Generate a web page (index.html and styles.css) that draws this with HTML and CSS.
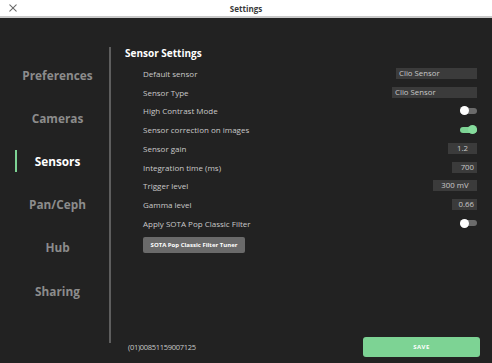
FILE: index.html
```html
<!DOCTYPE html>
<html lang="en">
<head>
    <meta charset="UTF-8">
    <meta name="viewport" content="width=device-width, initial-scale=1.0">
    <title>Settings</title>
    <link rel="stylesheet" href="styles.css">
</head>
<body>
    <header class="top-bar">
        <span class="close-button">
            <svg xmlns="http://www.w3.org/2000/svg" width="8" height="8" viewBox="0 0 10 10" fill="none" stroke="currentColor" stroke-width="1.3" stroke-linecap="round">
                <line x1="1" y1="1" x2="9" y2="9"></line>
                <line x1="9" y1="1" x2="1" y2="9"></line>
            </svg>
        </span>
        <h1 class="top-title">Settings</h1>
    </header>

    <div class="settings-layout">
        <nav class="side-nav">
            <div class="nav-item">Preferences</div>
            <div class="nav-item">Cameras</div>
            <div class="nav-item active">Sensors</div>
            <div class="nav-item">Pan/Ceph</div>
            <div class="nav-item">Hub</div>
            <div class="nav-item">Sharing</div>
        </nav>

        <main class="settings-panel">
            <h2 class="panel-title">Sensor Settings</h2>
            <div class="setting-list">
                <div class="setting-row">
                    <span class="setting-label">Default sensor</span>
                    <span class="field field-default">Clio Sensor</span>
                </div>
                <div class="setting-row">
                    <span class="setting-label">Sensor Type</span>
                    <span class="field field-type">Clio Sensor</span>
                </div>
                <div class="setting-row">
                    <span class="setting-label">High Contrast Mode</span>
                    <span class="toggle"></span>
                </div>
                <div class="setting-row">
                    <span class="setting-label">Sensor correction on images</span>
                    <span class="toggle on"></span>
                </div>
                <div class="setting-row">
                    <span class="setting-label">Sensor gain</span>
                    <span class="field field-gain">1.2</span>
                </div>
                <div class="setting-row">
                    <span class="setting-label">Integration time (ms)</span>
                    <span class="field field-small">700</span>
                </div>
                <div class="setting-row">
                    <span class="setting-label">Trigger level</span>
                    <span class="field field-trigger">300 mV</span>
                </div>
                <div class="setting-row">
                    <span class="setting-label">Gamma level</span>
                    <span class="field field-small">0.66</span>
                </div>
                <div class="setting-row">
                    <span class="setting-label">Apply SOTA Pop Classic Filter</span>
                    <span class="toggle"></span>
                </div>
            </div>
            <button class="tuner-button">SOTA Pop Classic Filter Tuner</button>

            <footer class="panel-footer">
                <span class="device-id">(01)00851159007125</span>
                <button class="save-button">SAVE</button>
            </footer>
        </main>
    </div>
</body>
</html>
```

FILE: styles.css
```css
:root {
    --bg: #222222;
    --field: #3b3b3b;
    --divider: #5e5e5e;
    --label: #c9c9c9;
    --nav: #8c8c8c;
    --green: #7dd394;
}

* {
    margin: 0;
    padding: 0;
    box-sizing: border-box;
}

body {
    font-family: 'Open Sans', sans-serif;
    background: var(--bg);
    width: 492px;
    height: 363px;
    overflow: hidden;
    color: var(--label);
}

.top-bar {
    height: 18px;
    background: #ffffff;
    border-bottom: 2px solid #c9c9c9;
    display: flex;
    align-items: center;
    position: relative;
}

.close-button {
    display: flex;
    color: #6a6a6a;
    margin-left: 9px;
}

.top-title {
    position: absolute;
    left: 0;
    right: 0;
    text-align: center;
    font-size: 8px;
    font-weight: 700;
    color: #3a3a3a;
}

.settings-layout {
    display: flex;
    height: 345px;
}

.side-nav {
    width: 111px;
    margin-top: 29px;
    height: 296px;
    border-right: 2px solid var(--divider);
    display: flex;
    flex-direction: column;
    padding-left: 6px;
    padding-top: 6px;
}

.nav-item {
    height: 43.2px;
    display: flex;
    align-items: center;
    justify-content: center;
    font-size: 11.8px;
    font-weight: 700;
    color: var(--nav);
    position: relative;
}

.nav-item.active {
    color: #ffffff;
}

.nav-item.active::before {
    content: '';
    position: absolute;
    left: 9px;
    top: 11px;
    width: 2px;
    height: 22px;
    background: var(--green);
}

.settings-panel {
    flex: 1;
    display: flex;
    flex-direction: column;
    padding: 29px 12px 6px 14px;
}

.panel-title {
    font-size: 10px;
    font-weight: 700;
    color: #ffffff;
    height: 13px;
    line-height: 13px;
}

.setting-list {
    display: flex;
    flex-direction: column;
    margin-top: 4px;
    padding-left: 18px;
    padding-right: 3px;
}

.setting-row {
    height: 18.75px;
    display: flex;
    align-items: center;
    justify-content: space-between;
}

.setting-label {
    font-size: 8px;
}

.field {
    background: var(--field);
    height: 11px;
    line-height: 11px;
    font-size: 7.8px;
    color: var(--label);
    padding: 0 3px;
}

.field-default {
    width: 81px;
}

.field-type {
    width: 85px;
}

.field-gain {
    width: 29px;
    text-align: center;
}

.field-small {
    width: 25px;
    text-align: right;
}

.field-trigger {
    width: 44px;
    text-align: center;
}

.toggle {
    width: 17px;
    height: 6px;
    border-radius: 3px;
    background: #6b6b6b;
    position: relative;
}

.toggle::after {
    content: '';
    position: absolute;
    left: 0;
    top: -1.5px;
    width: 9px;
    height: 9px;
    border-radius: 50%;
    background: #ffffff;
}

.toggle.on {
    background: var(--green);
}

.toggle.on::after {
    left: auto;
    right: 0;
    background: #86dc9d;
}

.tuner-button {
    align-self: flex-start;
    margin-left: 18px;
    margin-top: 4px;
    width: 102px;
    height: 16px;
    border: none;
    border-radius: 2px;
    background: #6a6a6a;
    color: #ffffff;
    font-family: inherit;
    font-size: 6px;
    font-weight: 700;
}

.panel-footer {
    margin-top: auto;
    display: flex;
    align-items: center;
    justify-content: space-between;
    padding-left: 3px;
}

.device-id {
    font-size: 7.5px;
    letter-spacing: -0.3px;
}

.save-button {
    width: 117px;
    height: 20px;
    border: none;
    border-radius: 3px;
    background: var(--green);
    color: #ffffff;
    font-family: inherit;
    font-size: 6px;
    font-weight: 700;
    letter-spacing: 0.5px;
    margin-right: 0;
}
```
